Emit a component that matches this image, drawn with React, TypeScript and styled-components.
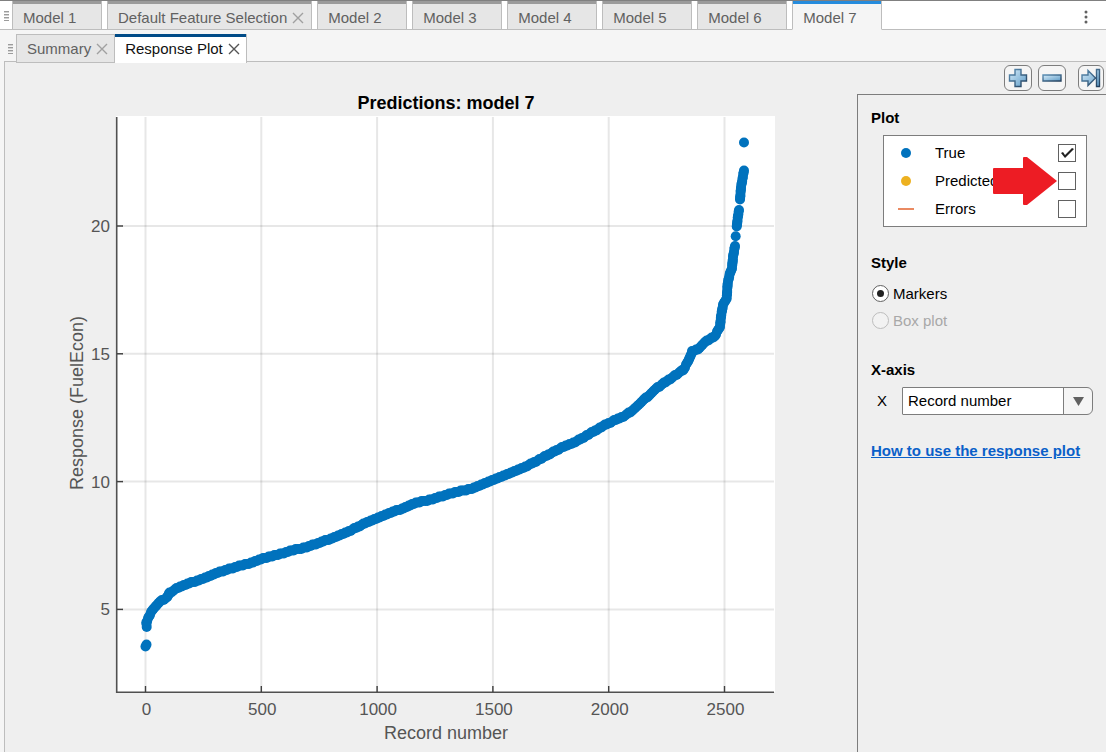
import React, { useState } from "react";
import styled, { createGlobalStyle, css } from "styled-components";

const GlobalStyle = createGlobalStyle`
  * { box-sizing: border-box; }
  body {
    margin: 0;
    background: #efefef;
    font-family: "Liberation Sans", Arial, sans-serif;
    font-size: 15px;
    line-height: 18px;
    color: #000;
  }
  button, select, input { font: inherit; color: inherit; margin: 0; }
  button { cursor: pointer; }
`;

const Page = styled.main`
  display: flex;
  flex-direction: column;
  min-height: 100vh;
  background: #f5f5f5;
`;

/* ---- document tabs ---- */

const DocumentBar = styled.div`
  display: flex;
  height: 30px;
  padding-left: 4px;
  background: #fff;
  border-top: 1px solid #808080;
  box-shadow: inset 0 -1px #bdbdbd;
`;

const Grip = styled.span`
  width: 5px;
  height: 10px;
  margin-top: 10px;
  margin-right: 3px;
  background: repeating-linear-gradient(#9c9c9c 0 1px, #d2d2d2 1px 2px, transparent 2px 3px);
`;

const DocumentTabs = styled.div`
  display: flex;
  gap: 5px;
`;

const DocumentTab = styled.div<{ $active?: boolean }>`
  display: flex;
  align-items: center;
  gap: 5px;
  min-width: 90px;
  padding: 0 7px 0 10px;
  color: #616161;
  border: solid #bdbdbd;
  border-width: 0 1px 1px;
  background: #e6e6e6;
  box-shadow: inset 0 3px #9b9b9b;
  ${(p) =>
    p.$active &&
    css`
      background: #f5f5f5;
      border-bottom-color: #f5f5f5;
      box-shadow: inset 0 3px #268cdd;
    `}
`;

const TabLabel = styled.button`
  padding: 6px 0 0;
  border: 0;
  background: none;
  white-space: nowrap;
`;

const CloseButton = styled.button`
  display: flex;
  padding: 6px 0 0;
  border: 0;
  background: none;
`;

const MenuButton = styled.button`
  display: flex;
  align-items: center;
  margin-left: auto;
  padding: 2px 18px 0;
  border: 0;
  background: none;
`;

/* ---- view tabs ---- */

const ViewBar = styled.div`
  display: flex;
  height: 33px;
  padding: 4px 0 0 8px;
`;

const ViewTabs = styled.div`
  display: flex;
`;

const ViewTab = styled.div<{ $active?: boolean }>`
  display: flex;
  align-items: center;
  gap: 5px;
  position: relative;
  z-index: 1;
  height: 29px;
  padding: 0 6px 0 10px;
  color: #616161;
  background: #e6e6e6;
  border: 1px solid #bdbdbd;
  ${TabLabel}, ${CloseButton} { padding-top: 0; }
  ${(p) =>
    p.$active &&
    css`
      color: #111;
      background: #fff;
      border-width: 0 1px 0 0;
      box-shadow: inset 0 3px #004b87;
    `}
`;

const Workspace = styled.div`
  display: flex;
  flex: 1;
  margin: -2px 0 0 4px;
  background: #efefef;
  border: solid #bdbdbd;
  border-width: 1px 0 0 1px;
`;

/* ---- chart ---- */

const ChartPane = styled.section`
  flex: 1;
  min-width: 0;
`;

const Chart = styled.svg`
  display: block;
  width: 100%;
  height: auto;
  font-family: "Liberation Sans", Arial, sans-serif;
`;

/* ---- options ---- */

const Sidebar = styled.aside`
  display: flex;
  flex-direction: column;
  flex: none;
  width: 249px;
`;

const Toolbar = styled.div`
  display: flex;
  justify-content: flex-end;
  gap: 6px;
  height: 32px;
  padding: 3px 2px 0 0;
`;

const ToolButton = styled.button<{ $apart?: boolean }>`
  display: flex;
  align-items: center;
  justify-content: center;
  width: ${(p) => (p.$apart ? "26px" : "28px")};
  height: 26px;
  padding: 0;
  margin-left: ${(p) => (p.$apart ? "6px" : "0")};
  border: 1px solid #7d7d7d;
  border-radius: 6px;
  background: #f5f5f5;
`;

const Options = styled.form`
  flex: 1;
  padding: 14px 13px;
  border: solid #7d7d7d;
  border-width: 1px 0 0 1px;
`;

const Group = styled.fieldset`
  min-width: 0;
  margin: 0 0 27px;
  padding: 0;
  border: 0;
`;

const Heading = styled.legend`
  padding: 0;
  margin-bottom: 8px;
  font-weight: bold;
`;

const SeriesList = styled.div`
  margin: 0 6px 0 12px;
  padding: 3px 0;
  background: #fff;
  border: 1px solid #7d7d7d;
`;

const SeriesRow = styled.label`
  display: grid;
  grid-template-columns: 44px 1fr auto;
  align-items: center;
  position: relative;
  height: 28px;
  padding: 0 10px 0 7px;
`;

const Swatch = styled.svg`
  width: 30px;
  height: 12px;
`;

const CheckBox = styled.input`
  appearance: none;
  width: 18px;
  height: 18px;
  border: 1px solid #616161;
  background: #fff;
  display: grid;
  place-items: center;
  &:checked::before {
    content: "";
    width: 14px;
    height: 14px;
    background: #212121;
    clip-path: polygon(1px 7px, 3px 6px, 5px 9px, 12px 2px, 14px 3px, 5px 12px);
  }
`;

const Callout = styled.svg`
  position: absolute;
  right: 29px;
  top: -10px;
  width: 64px;
  height: 48px;
  pointer-events: none;
`;

const RadioRow = styled.label<{ $disabled?: boolean }>`
  display: flex;
  align-items: center;
  gap: 4px;
  height: 27px;
  padding-left: 1px;
  color: ${(p) => (p.$disabled ? "#a8a8a8" : "#000")};
`;

const Radio = styled.input`
  appearance: none;
  display: grid;
  place-items: center;
  width: 17px;
  height: 17px;
  border: 1px solid #616161;
  border-radius: 50%;
  background: #fff;
  &:checked::before {
    content: "";
    width: 7px;
    height: 7px;
    border-radius: 50%;
    background: #212121;
  }
  &:disabled { border-color: #bdbdbd; background: #f2f2f2; }
`;

const AxisRow = styled.label`
  display: flex;
  align-items: center;
  gap: 15px;
  padding: 0 0 0 6px;
`;

const Picker = styled.span`
  display: grid;
  grid-template-columns: 1fr 29px;
  flex: 1;
  height: 28px;
  border: 1px solid #7d7d7d;
  border-radius: 1px 6px 6px 1px;
  background: #f5f5f5;
  overflow: hidden;
`;

const Select = styled.select`
  grid-area: 1 / 1 / 2 / 3;
  appearance: none;
  min-width: 0;
  padding: 0 34px 0 5px;
  border: 0;
  background: linear-gradient(#fff, #fff) 0 0 / calc(100% - 29px) 100% no-repeat;
`;

const PickerArrow = styled.span`
  grid-area: 1 / 2 / 2 / 3;
  display: grid;
  place-items: center;
  border-left: 1px solid #7d7d7d;
  pointer-events: none;
`;

const HelpLink = styled.a`
  font-weight: bold;
  color: #0a60c9;
`;

type Point = [number, number];

/* Marker trails of the plotted responses; each inner list is one unbroken run. */
const runs: Point[][] = [
  [[145.5, 646.5], [146.5, 644.5]],
  [[146.7, 626.5], [146.3, 622.5], [149, 616.5], [151, 612], [153.3, 608.5], [160, 601.5], [167.3, 597.5], [169.5, 593],
    [180, 586.5], [193, 582], [207, 577], [214, 574], [227, 569.5], [247, 564], [263, 558.7], [280, 554], [290, 551],
    [307, 547], [327, 540], [347, 532], [367, 522.5], [387, 514], [402, 508.7], [412, 504], [433, 499], [453, 493],
    [472, 488.5], [492, 480.5], [507, 474.5], [527, 466], [543, 457.5], [560, 448.5], [577, 441], [590, 433.5],
    [603, 426], [627, 414.5], [640, 404], [653, 391], [667, 381], [683, 370], [688, 362], [692, 351.5], [698, 349],
    [705, 342], [715, 336], [720, 326.5], [721, 316.5], [723, 305], [726.7, 298], [727.7, 283], [730, 273], [732, 268],
    [733, 257], [735, 246]],
  [[735.7, 236.2]],
  [[736.7, 227], [737.7, 218], [739, 210]],
  [[740, 200], [741, 187], [744, 170.5]],
  [[744, 142.5]],
];

const level = 1.5;
const spread = (run: Point[]): Point[] =>
  run.flatMap(([x, y], i) => {
    const next = run[i + 1];
    if (!next) return [[x, y] as Point];
    const steps = Math.max(1, Math.round(Math.hypot(next[0] - x, next[1] - y) / 2));
    return Array.from({ length: steps }, (_, k): Point => [
      x + ((next[0] - x) * k) / steps,
      Math.round((y + ((next[1] - y) * k) / steps) / level) * level,
    ]);
  });

const markers = runs.flatMap(spread);
const xTicks = [0, 500, 1000, 1500, 2000, 2500];
const yTicks = [5, 10, 15, 20];
const xAt = (v: number) => 145.5 + v * 0.2316;
const yAt = (v: number) => 737.2 - v * 25.56;

const ResponseChart = ({ showTrue }: { showTrue: boolean }) => (
  <Chart viewBox="5 62 852 690" role="img" aria-label="Predictions: model 7">
    <rect x="116" y="116" width="659" height="576" fill="#fff" />
    <g stroke="#262626" strokeOpacity="0.11" strokeWidth="2">
      {xTicks.map((v) => <line key={v} x1={xAt(v)} x2={xAt(v)} y1="117" y2="686" />)}
      {yTicks.map((v) => <line key={v} x1="122" x2="774" y1={yAt(v)} y2={yAt(v)} />)}
    </g>
    <path d="M116.700 117V692.300H774" fill="none" stroke="#505050" strokeWidth="1.600" />
    <g stroke="#404040" strokeWidth="1.500">
      {xTicks.map((v) => <line key={v} x1={xAt(v)} x2={xAt(v)} y1="686" y2="692" />)}
      {yTicks.map((v) => <line key={v} x1="117" x2="123" y1={yAt(v)} y2={yAt(v)} />)}
    </g>
    {showTrue && (
      <g fill="#0072bd">
        {markers.map(([x, y], i) => <circle key={i} cx={x} cy={y} r="5" />)}
      </g>
    )}
    <g fill="#555" fontSize="17">
      {xTicks.map((v) => <text key={v} x={xAt(v) + 1} y="715" textAnchor="middle">{v}</text>)}
      {yTicks.map((v) => <text key={v} x="110" y={yAt(v) + 6} textAnchor="end">{v}</text>)}
    </g>
    <g fill="#555" fontSize="18" textAnchor="middle">
      <text x="446" y="739">Record number</text>
      <text transform="translate(83 403) rotate(-90)">Response (FuelEcon)</text>
    </g>
    <text x="446" y="109" fontSize="18" fontWeight="bold" textAnchor="middle">Predictions: model 7</text>
  </Chart>
);

const Cross = ({ color }: { color: string }) => (
  <svg width="12" height="12" viewBox="0 0 12 12" aria-hidden="true">
    <path d="M1 1L11 11M11 1L1 11" stroke={color} strokeWidth="1.4" fill="none" />
  </svg>
);

const toolShapes = {
  plus: "M7 1.500h6v5.500h5.500v6H13v5.500H7V13H1.500V7H7z",
  minus: "M1 7h18v6H1z",
  dock: "M1 7h6V2.500L14.500 10 7 17.500V13H1zM15.500 1.500h3v17h-3z",
};

const ToolIcon = ({ kind }: { kind: keyof typeof toolShapes }) => (
  <svg width="20" height="20" viewBox="0 0 20 20" aria-hidden="true">
    <defs>
      <linearGradient id={`fill-${kind}`} x1="0" y1="0" x2="1" y2="1">
        <stop offset="0" stopColor="#d6ebf8" />
        <stop offset="1" stopColor="#5e9cc8" />
      </linearGradient>
      <linearGradient id={`edge-${kind}`} x1="0" y1="0" x2="1" y2="1">
        <stop offset="0" stopColor="#5b8fb5" />
        <stop offset="1" stopColor="#233f5c" />
      </linearGradient>
    </defs>
    <path d={toolShapes[kind]} fill={`url(#fill-${kind})`} stroke={`url(#edge-${kind})`} strokeWidth="1.4" />
  </svg>
);

const documents = ["Model 1", "Default Feature Selection", "Model 2", "Model 3", "Model 4", "Model 5", "Model 6", "Model 7"];
const active = "Model 7";

export default function App() {
  const [showTrue, setShowTrue] = useState(true);

  return (
    <>
      <GlobalStyle />
      <Page>
        <DocumentBar>
          <Grip />
          <DocumentTabs role="tablist" aria-label="Models">
            {documents.map((name) => (
              <DocumentTab key={name} $active={name === active}>
                <TabLabel type="button" role="tab" aria-selected={name === active}>{name}</TabLabel>
                {name === "Default Feature Selection" && (
                  <CloseButton type="button" aria-label={`Close ${name}`}><Cross color="#a0a0a0" /></CloseButton>
                )}
              </DocumentTab>
            ))}
          </DocumentTabs>
          <MenuButton type="button" aria-label="More actions">
            <svg width="4" height="14" viewBox="0 0 4 14" fill="#616161" aria-hidden="true">
              <circle cx="2" cy="2" r="1.500" /><circle cx="2" cy="7" r="1.500" /><circle cx="2" cy="12" r="1.500" />
            </svg>
          </MenuButton>
        </DocumentBar>

        <ViewBar>
          <Grip />
          <ViewTabs role="tablist" aria-label="Views">
            <ViewTab>
              <TabLabel type="button" role="tab" aria-selected={false}>Summary</TabLabel>
              <CloseButton type="button" aria-label="Close Summary"><Cross color="#a0a0a0" /></CloseButton>
            </ViewTab>
            <ViewTab $active>
              <TabLabel type="button" role="tab" aria-selected>Response Plot</TabLabel>
              <CloseButton type="button" aria-label="Close Response Plot"><Cross color="#555" /></CloseButton>
            </ViewTab>
          </ViewTabs>
        </ViewBar>

        <Workspace>
          <ChartPane>
            <ResponseChart showTrue={showTrue} />
          </ChartPane>
          <Sidebar>
            <Toolbar>
              <ToolButton type="button" aria-label="Expand"><ToolIcon kind="plus" /></ToolButton>
              <ToolButton type="button" aria-label="Collapse"><ToolIcon kind="minus" /></ToolButton>
              <ToolButton type="button" aria-label="Hide panel" $apart><ToolIcon kind="dock" /></ToolButton>
            </Toolbar>
            <Options>
              <Group>
                <Heading>Plot</Heading>
                <SeriesList>
                  <SeriesRow>
                    <Swatch viewBox="0 0 30 12"><circle cx="15" cy="6" r="5" fill="#0072bd" /></Swatch>
                    True
                    <CheckBox type="checkbox" checked={showTrue} onChange={(e) => setShowTrue(e.target.checked)} />
                  </SeriesRow>
                  <SeriesRow>
                    <Swatch viewBox="0 0 30 12"><circle cx="15" cy="6" r="5" fill="#edb120" /></Swatch>
                    Predicted
                    <CheckBox type="checkbox" />
                    <Callout viewBox="0 0 64 48" aria-hidden="true">
                      <path d="M1 11H30V1Q30 0 31 0H34L64 24L34 48H31Q30 48 30 47V37H1Q0 37 0 36V12Q0 11 1 11Z" fill="#ed1c24" />
                    </Callout>
                  </SeriesRow>
                  <SeriesRow>
                    <Swatch viewBox="0 0 30 12"><path d="M7 6H23" stroke="#ea8a62" strokeWidth="2" /></Swatch>
                    Errors
                    <CheckBox type="checkbox" />
                  </SeriesRow>
                </SeriesList>
              </Group>
              <Group>
                <Heading>Style</Heading>
                <RadioRow><Radio type="radio" name="style" defaultChecked />Markers</RadioRow>
                <RadioRow $disabled><Radio type="radio" name="style" disabled />Box plot</RadioRow>
              </Group>
              <Group>
                <Heading>X-axis</Heading>
                <AxisRow>
                  X
                  <Picker>
                    <Select defaultValue="record">
                      <option value="record">Record number</option>
                    </Select>
                    <PickerArrow>
                      <svg width="11" height="9" viewBox="0 0 11 9" aria-hidden="true"><path d="M0 0H11L5.500 9Z" fill="#616161" /></svg>
                    </PickerArrow>
                  </Picker>
                </AxisRow>
              </Group>
              <HelpLink href="#response-plot">How to use the response plot</HelpLink>
            </Options>
          </Sidebar>
        </Workspace>
      </Page>
    </>
  );
}
